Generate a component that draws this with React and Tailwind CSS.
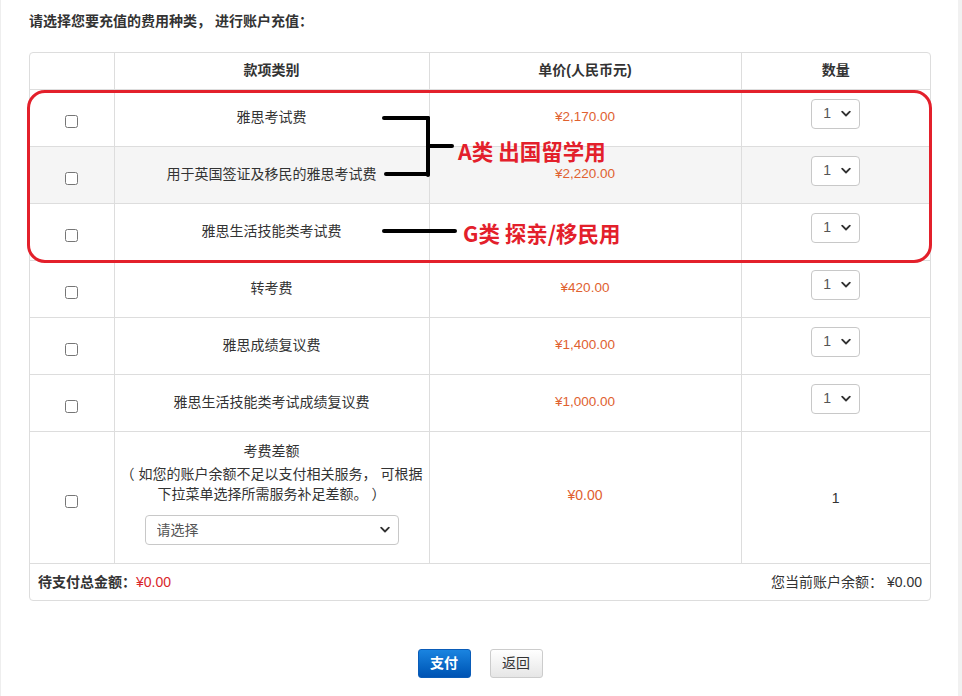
import React from "react";

const rows = [
  { name: "雅思考试费", price: "¥2,170.00", gray: false },
  { name: "用于英国签证及移民的雅思考试费", price: "¥2,220.00", gray: true },
  { name: "雅思生活技能类考试费", price: "", gray: false },
  { name: "转考费", price: "¥420.00", gray: false },
  { name: "雅思成绩复议费", price: "¥1,400.00", gray: false },
  { name: "雅思生活技能类考试成绩复议费", price: "¥1,000.00", gray: false },
];

function Chevron() {
  return (
    <svg width="10" height="7" viewBox="0 0 10 7" className="pointer-events-none absolute right-[9px] top-1/2 -translate-y-1/2">
      <path d="M1.2 1.2 L5 5 L8.8 1.2" fill="none" stroke="#333" strokeWidth="1.8" strokeLinecap="round" strokeLinejoin="round" />
    </svg>
  );
}

function QtySelect() {
  return (
    <div className="relative inline-block mb-[8px]">
      <select className="appearance-none w-[49px] h-[30px] border border-[#c8c8c8] rounded-[4px] bg-white pl-[11px] text-[14px] text-[#555] outline-none">
        <option>1</option>
      </select>
      <Chevron />
    </div>
  );
}

function Box() {
  return <input type="checkbox" className="w-[13px] h-[13px] mt-[7px] align-middle" />;
}

export default function App() {
  return (
    <div
      className="relative w-[962px] h-[696px] bg-white flex text-[#333] overflow-hidden [text-spacing-trim:space-all]"
      style={{ fontFamily: '"Liberation Sans", "Noto Sans CJK SC", sans-serif' }}
    >
      <div className="w-[1px] bg-[#eeeeee]" />
      <div className="flex-1 flex flex-col pl-[28px] pr-[27px]">
        <div className="h-[52px] pt-[11px] text-[14px] font-bold leading-[20px]">
          请选择您要充值的费用种类， 进行账户充值：
        </div>
        <div className="w-[902px] border border-[#dddddd] rounded-[4px] overflow-hidden">
          <table className="w-full table-fixed border-collapse text-[14px]">
            <colgroup>
              <col className="w-[84px]" />
              <col className="w-[315px]" />
              <col className="w-[312px]" />
              <col />
            </colgroup>
            <thead>
              <tr className="h-[36px] font-bold">
                <th className="border-r border-[#dddddd]"></th>
                <th className="border-r border-[#dddddd] font-bold">款项类别</th>
                <th className="border-r border-[#dddddd] font-bold">单价(人民币元)</th>
                <th className="font-bold">数量</th>
              </tr>
            </thead>
            <tbody>
              {rows.map((r, i) => (
                <tr key={i} className={`h-[57px] border-t border-[#dddddd] ${r.gray ? "bg-[#f5f5f5]" : "bg-white"}`}>
                  <td className="border-r border-[#dddddd] text-center align-middle">
                    <Box />
                  </td>
                  <td className="border-r border-[#dddddd] text-center align-middle text-[#333]">{r.name}</td>
                  <td className="border-r border-[#dddddd] text-center align-middle text-[13.5px] text-[#e0612f]">
                    {r.price}
                  </td>
                  <td className="text-center align-middle">
                    <QtySelect />
                  </td>
                </tr>
              ))}
              <tr className="h-[132px] border-t border-[#dddddd]">
                <td className="border-r border-[#dddddd] text-center align-middle">
                  <Box />
                </td>
                <td className="border-r border-[#dddddd] text-center align-top px-[4px] pt-[9px] leading-[20px]">
                  <div>考费差额</div>
                  <div className="mt-[3px] whitespace-nowrap">（ 如您的账户余额不足以支付相关服务， 可根据</div>
                  <div>下拉菜单选择所需服务补足差额。 ）</div>
                  <div className="relative w-[254px] mx-auto mt-[11px]">
                    <select className="appearance-none w-[254px] h-[30px] border border-[#c8c8c8] rounded-[4px] bg-white pl-[11px] text-[14px] text-[#555] outline-none">
                      <option>请选择</option>
                    </select>
                    <Chevron />
                  </div>
                </td>
                <td className="border-r border-[#dddddd] text-center align-middle text-[14px] text-[#e0612f]">
                  <div className="mb-[4px]">¥0.00</div>
                </td>
                <td className="text-center align-middle text-[14px]">
                  <div className="mt-[2px]">1</div>
                </td>
              </tr>
            </tbody>
          </table>
          <div className="h-[37px] border-t border-[#dddddd] flex items-center justify-between pl-[8px] pr-[8px] text-[14px]">
            <div>
              <span className="font-bold">待支付总金额：</span>
              <span className="text-[#d9262b]">¥0.00</span>
            </div>
            <div>您当前账户余额： ¥0.00</div>
          </div>
        </div>
        <div className="flex justify-center gap-[19px] mt-[48px]">
          <button className="w-[53px] h-[29px] rounded-[3px] border border-[#0a5cb8] bg-gradient-to-b from-[#1a84e0] to-[#0053b3] text-white text-[14px] font-bold">
            支付
          </button>
          <button className="w-[53px] h-[29px] rounded-[3px] border border-[#cccccc] bg-gradient-to-b from-white to-[#e6e6e6] text-[#333] text-[14px]">
            返回
          </button>
        </div>
      </div>
      <div className="w-[4px] bg-[#f1f1f1]" />

      {/* annotation overlay */}
      <div className="absolute left-[27px] top-[90px] w-[905px] h-[173px] border-[3.5px] border-[#e3202b] rounded-[18px] pointer-events-none" />
      <div className="absolute left-[382px] top-[116px] w-[48px] h-[4px] bg-black rounded-full" />
      <div className="absolute left-[426px] top-[116px] w-[4px] h-[61px] bg-black rounded-full" />
      <div className="absolute left-[384px] top-[172px] w-[46px] h-[4px] bg-black rounded-full" />
      <div className="absolute left-[428px] top-[144px] w-[26px] h-[4px] bg-black rounded-full" />
      <div className="absolute left-[382px] top-[229px] w-[75px] h-[4px] bg-black rounded-full" />
      <div
        className="absolute left-[458px] top-[137px] text-[21.5px] font-bold text-[#e3202b] leading-[28px] whitespace-nowrap"
        style={{ fontFamily: '"Noto Sans CJK SC", sans-serif' }}
      >
        A类 出国留学用
      </div>
      <div
        className="absolute left-[463px] top-[219px] text-[21.5px] font-bold text-[#e3202b] leading-[28px] whitespace-nowrap"
        style={{ fontFamily: '"Noto Sans CJK SC", sans-serif' }}
      >
        G类 探亲/移民用
      </div>
    </div>
  );
}
